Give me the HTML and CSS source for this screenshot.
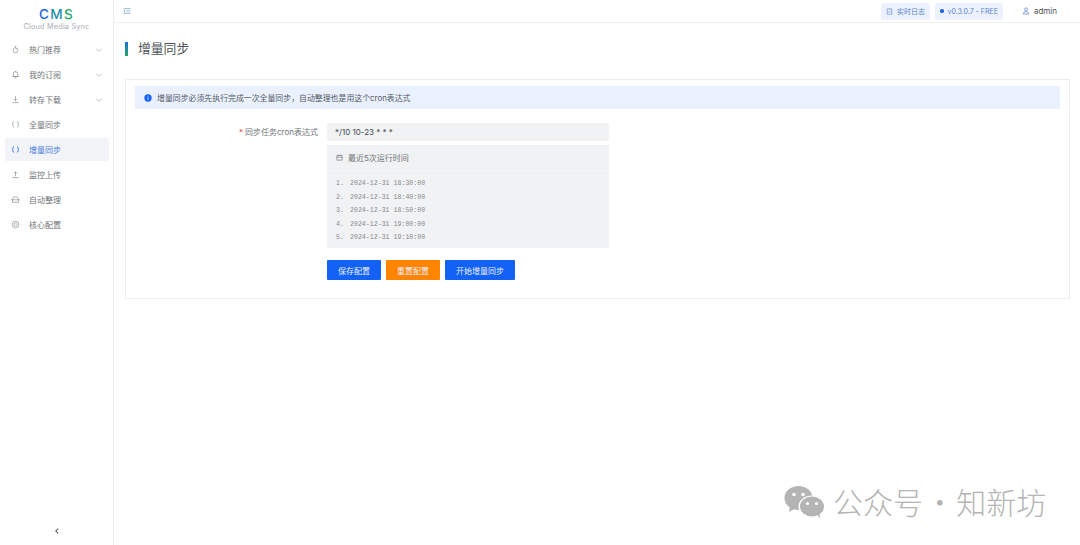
FILE: index.html
```html
<!DOCTYPE html>
<html lang="zh">
<head>
<meta charset="utf-8">
<title>增量同步</title>
<link rel="stylesheet" href="styles.css">
</head>
<body>
<div class="app">
  <aside class="sidebar">
    <div class="logo">
      <div class="logo-title"><span class="c1">C</span><span class="c2">M</span><span class="c3">S</span></div>
      <div class="logo-sub">Cloud Media Sync</div>
    </div>
    <nav class="menu">
      <div class="item"><svg class="ico" viewBox="0 0 16 16"><path d="M8 2c.5 2-4 4-4 8a4 4 0 0 0 8 0c0-2-1-3-1.500-4-.5 1-1 1.500-1.500 1.500C8.500 6 9 4 8 2z"/></svg><span class="label">热门推荐</span><svg class="chev" viewBox="0 0 12 12"><path d="M2 4l4 4 4-4"/></svg></div>
      <div class="item"><svg class="ico" viewBox="0 0 16 16"><path d="M4 11.500V7a4 4 0 0 1 8 0v4.500zM2.500 11.500h11M6.500 14h3M8 3V1.500"/></svg><span class="label">我的订阅</span><svg class="chev" viewBox="0 0 12 12"><path d="M2 4l4 4 4-4"/></svg></div>
      <div class="item"><svg class="ico" viewBox="0 0 16 16"><path d="M8 2v8M5 7l3 3 3-3M2.500 13.500h11"/></svg><span class="label">转存下载</span><svg class="chev" viewBox="0 0 12 12"><path d="M2 4l4 4 4-4"/></svg></div>
      <div class="item"><svg class="ico" viewBox="0 0 16 16"><path d="M5.500 2.500C3.500 3.500 3 6 3 8s.5 4.500 2.500 5.500M10.500 2.500C12.500 3.500 13 6 13 8s-.5 4.500-2.500 5.500"/></svg><span class="label">全量同步</span></div>
      <div class="item active"><svg class="ico" viewBox="0 0 16 16"><path d="M5.500 2.500C3.500 3.500 3 6 3 8s.5 4.500 2.500 5.500M10.500 2.500C12.500 3.500 13 6 13 8s-.5 4.500-2.500 5.500"/></svg><span class="label">增量同步</span></div>
      <div class="item"><svg class="ico" viewBox="0 0 16 16"><path d="M8 11V3M5 6l3-3 3 3M2.500 13.500h11"/></svg><span class="label">监控上传</span></div>
      <div class="item"><svg class="ico" viewBox="0 0 16 16"><path d="M2.500 8a5.500 5 0 0 1 11 0v5h-11zM1 8.500h14"/></svg><span class="label">自动整理</span></div>
      <div class="item"><svg class="ico" viewBox="0 0 16 16"><circle cx="8" cy="8" r="6"/><circle cx="8" cy="8" r="2.500"/></svg><span class="label">核心配置</span></div>
    </nav>
    <div class="collapse"><svg viewBox="0 0 10 10"><path d="M6.500 2L3.500 5l3 3"/></svg></div>
  </aside>
  <div class="main">
    <header class="topbar">
      <svg class="hamburger" viewBox="0 0 12 12"><path d="M1 2.500h10M5 6h6M1 9.500h10M1 4.500L3 6 1 7.500"/></svg>
      <div class="top-right">
        <div class="tag"><svg class="tag-ico" viewBox="0 0 12 12"><path d="M2 1.500h8v9H2zM4 6l1.500 1.500L8 4.500"/></svg>实时日志</div>
        <div class="tag"><span class="dot"></span>v0.3.0.7 - FREE</div>
        <div class="user"><svg class="user-ico" viewBox="0 0 12 12"><circle cx="6" cy="3.500" r="2.200"/><path d="M2 10.500c0-2.500 1.500-3.500 4-3.500s4 1 4 3.500z"/></svg>admin</div>
      </div>
    </header>
    <main class="content">
      <h1 class="page-title">增量同步</h1>
      <section class="card">
        <div class="alert"><svg class="alert-ico" viewBox="0 0 12 12"><circle cx="6" cy="6" r="5.500" fill="#1661f5"/><path d="M6 5.200v3.500M6 2.800v1.200" stroke="#fff" stroke-width="1.200"/></svg>增量同步必须先执行完成一次全量同步，自动整理也是用这个cron表达式</div>
        <div class="form">
          <div class="form-label"><span class="req">*</span>同步任务cron表达式</div>
          <div class="form-body">
            <div class="input">*/10 10-23 * * *</div>
            <div class="panel">
              <div class="panel-head"><svg class="cal" viewBox="0 0 12 12"><path d="M1.500 2.500h9v8h-9zM1.500 5.500h9M4 1v2M8 1v2"/></svg>最近5次运行时间</div>
              <ol class="times">
                <li><span class="n">1.</span>2024-12-31 18:30:00</li>
                <li><span class="n">2.</span>2024-12-31 18:40:00</li>
                <li><span class="n">3.</span>2024-12-31 18:50:00</li>
                <li><span class="n">4.</span>2024-12-31 19:00:00</li>
                <li><span class="n">5.</span>2024-12-31 19:10:00</li>
              </ol>
            </div>
            <div class="actions">
              <button class="btn blue">保存配置</button>
              <button class="btn orange">重置配置</button>
              <button class="btn blue">开始增量同步</button>
            </div>
          </div>
        </div>
      </section>
    </main>
  </div>
</div>
<div class="watermark">
  <svg class="wechat" viewBox="0 0 42 34">
    <ellipse cx="14.500" cy="13" rx="14" ry="12" fill="#b4b4b4"/>
    <path d="M6 21l-1 6 7-4z" fill="#b4b4b4"/>
    <ellipse cx="28" cy="21.500" rx="13.500" ry="11" fill="#fff"/>
    <ellipse cx="28" cy="21.500" rx="12" ry="10" fill="#b4b4b4"/>
    <path d="M33 29l3 4.500-.5-6.500z" fill="#b4b4b4"/>
    <circle cx="10" cy="9.500" r="1.800" fill="#fff"/><circle cx="19" cy="9.500" r="1.800" fill="#fff"/>
    <circle cx="23.500" cy="18.500" r="1.600" fill="#fff"/><circle cx="32.500" cy="18.500" r="1.600" fill="#fff"/>
  </svg>
  <span class="wm-text">公众号 · 知新坊</span>
</div>
</body>
</html>
```
FILE: styles.css
```css
* { box-sizing: border-box; }
html, body { margin: 0; height: 100%; overflow: hidden; background: #fff; }
body { font-family: Inter, "Noto Sans CJK SC", sans-serif; color: #4e5358; }
.app { display: flex; height: 545px; }

.sidebar { width: 114px; flex: none; border-right: 1px solid #eef0f2; display: flex; flex-direction: column; }
.logo { height: 37px; padding-top: 7px; text-align: center; }
.logo-title { font-size: 13.500px; line-height: 14px; letter-spacing: 1.300px; font-weight: 500; }
.c1 { color: #1a66e0; } .c2 { color: #1f8fa8; } .c3 { color: #1fa864; }
.logo-sub { font-size: 7.300px; line-height: 11px; letter-spacing: .2px; color: #a8acb0; }
.menu { padding: 1px 4px 0 5px; display: flex; flex-direction: column; gap: 2px; }
.item { height: 23px; display: flex; align-items: center; padding-left: 6px; font-size: 8px; color: #6f7479; border-radius: 2px; }
.item .label { flex: 1; margin-left: 9px; padding-bottom: 1px; }
.ico { width: 9px; height: 9px; fill: none; stroke: #7b8085; stroke-width: 1.100; flex: none; }
.chev { width: 8px; height: 8px; fill: none; stroke: #9a9ea3; stroke-width: 1; margin-right: 6px; }
.item.active { background: #f1f3f6; color: #4a7bdc; }
.item.active .ico { stroke: #1f5fe0; stroke-width: 1.500; }
.collapse { margin-top: auto; height: 18px; display: flex; justify-content: center; align-items: flex-start; }
.collapse svg { width: 8px; height: 8px; fill: none; stroke: #555; stroke-width: 1.300; }

.main { flex: 1; display: flex; flex-direction: column; min-width: 0; }
.topbar { height: 23px; flex: none; border-bottom: 1px solid #eef0f2; display: flex; align-items: center; justify-content: space-between; padding: 0 23px 0 9px; }
.hamburger { width: 8px; height: 8px; fill: none; stroke: #2f6fb0; stroke-width: .8; }
.top-right { display: flex; align-items: center; gap: 5px; }
.tag { height: 17px; padding: 0 5px; background: #ecf2fd; border-radius: 2px; display: flex; align-items: center; gap: 4px; font-size: 7px; color: #5a84cc; }
.tag-ico { width: 7px; height: 7px; fill: none; stroke: #4c78c4; stroke-width: 1; }
.dot { width: 3.500px; height: 3.500px; border-radius: 50%; background: #1f5fe0; }
.user { display: flex; align-items: center; gap: 4px; font-size: 8px; color: #4e5358; margin-left: 14px; }
.user-ico { width: 8px; height: 8px; fill: none; stroke: #4c78c4; stroke-width: 1; }

.content { padding: 0 10px 0 11px; }
.page-title { margin: 18px 0 0; height: 16px; line-height: 16px; padding-left: 13px; font-size: 12.800px; font-weight: 400; color: #4e5358; position: relative; }
.page-title::before { content: ""; position: absolute; left: 0; top: 1px; width: 2.500px; height: 14px; background: linear-gradient(#1d6fe0, #1fa864); }
.card { margin-top: 22px; height: 220px; border: 1px solid #eceef0; padding: 6px 9px; }
.alert { height: 23px; background: #e9f1fe; display: flex; align-items: center; padding-left: 9px; gap: 5px; font-size: 7.900px; color: #55595e; border-radius: 1px; }
.alert-ico { width: 8px; height: 8px; fill: none; flex: none; }
.form { display: flex; margin-top: 14px; }
.form-label { width: 183px; flex: none; text-align: right; font-size: 8px; line-height: 18px; color: #6f7479; }
.req { color: #e5484d; margin-right: 2px; }
.form-body { margin-left: 9px; width: 282px; }
.input { height: 18px; background: #f1f2f4; padding-left: 8px; font-size: 8px; line-height: 18px; color: #45494e; border-radius: 1px; }
.panel { margin-top: 4px; height: 103px; background: #f1f2f4; border-radius: 1px; }
.panel-head { height: 26px; padding-left: 9px; display: flex; align-items: center; gap: 5px; font-size: 8px; color: #6f7479; border-bottom: 1px solid #f6f7f8; }
.cal { width: 7px; height: 7px; fill: none; stroke: #63686d; stroke-width: 1; }
.times { list-style: none; margin: 0; padding: 6px 0 0 9px; font-family: "Liberation Mono", monospace; font-size: 6.600px; line-height: 13.500px; color: #85898e; }
.times li { display: flex; }
.n { width: 14px; flex: none; }
.actions { margin-top: 12px; display: flex; gap: 5px; }
.btn { height: 20px; padding: 0 11px; border: 0; border-radius: 1px; font: 8px Inter, "Noto Sans CJK SC", sans-serif; color: #e8effd; }
.blue { background: #1361f5; }
.orange { background: #ff8400; }

.watermark { position: absolute; left: 784px; top: 484px; display: flex; align-items: center; gap: 7px; color: #b4b4b4; font-size: 30px; line-height: 36px; font-family: "Noto Sans CJK SC", sans-serif; font-weight: 300; white-space: nowrap; word-spacing: -5px; }
.wechat { width: 42px; height: 34px; flex: none; }
.wm-text { position: relative; top: -1px; }
```
